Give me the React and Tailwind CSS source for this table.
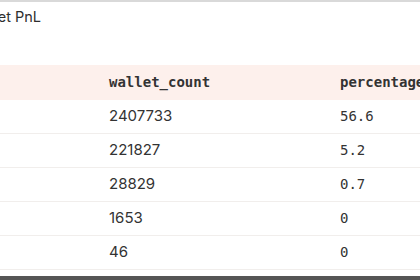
export default function App() {
  const rows = [
    ["2407733", "56.6"],
    ["221827", "5.2"],
    ["28829", "0.7"],
    ["1653", "0"],
    ["46", "0"],
  ];
  return (
    <div className="w-[420px] h-[280px] overflow-hidden bg-white relative flex flex-col" style={{ fontFamily: '"Inter", "Noto Sans", sans-serif' }}>
      <div className="h-[2px] bg-[#d9d9d9] shrink-0" />
      <div className="h-[30px] shrink-0 flex items-center">
        <span className="ml-[-31px] text-[14.5px] text-[#2e2e2e] whitespace-nowrap">Wallet PnL</span>
      </div>
      <div className="h-[33px] shrink-0" />
      <div className="h-[35px] shrink-0 bg-[#fdf0ec] flex items-center text-[14px] font-semibold text-[#333] whitespace-nowrap" style={{ fontFamily: '"DejaVu Sans Mono", monospace' }}>
        <div className="w-[109px] shrink-0" />
        <div className="w-[231px] shrink-0">wallet_count</div>
        <div className="whitespace-nowrap">percentage</div>
      </div>
      {rows.map((r, i) => (
        <div key={i} className="h-[34px] shrink-0 flex items-center border-b border-[#f1eeec] text-[14px] text-[#333]">
          <div className="w-[109px] shrink-0" />
          <div className="w-[231px] shrink-0 text-[15px]">{r[0]}</div>
          <div style={{ fontFamily: '"DejaVu Sans Mono", monospace' }}>{r[1]}</div>
        </div>
      ))}
      <div className="flex-1" />
      <div className="h-[4px] bg-[#555] shrink-0" />
    </div>
  );
}
